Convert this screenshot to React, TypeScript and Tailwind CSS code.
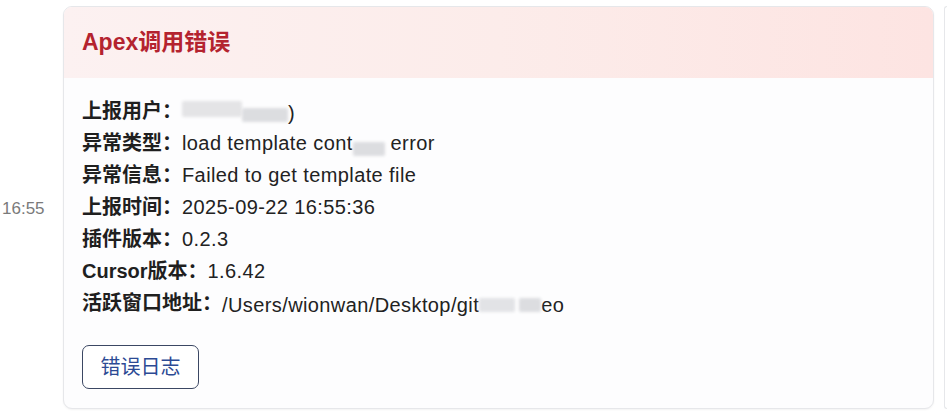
function Blur({ w, className = "" }: { w: number; className?: string }) {
  return (
    <span
      className={`inline-block h-[14px] rounded-[2px] bg-[#dcdde0] align-middle blur-[1.5px] ${className}`}
      style={{ width: w }}
    />
  );
}

function Row({ label, children }: { label: string; children: React.ReactNode }) {
  return (
    <div className="flex h-[32px] items-center whitespace-nowrap">
      <span className="font-semibold text-[#1f1f1f]">{label}：</span>
      <span className="tracking-[0.4px] text-[#222]">{children}</span>
    </div>
  );
}

export default function App() {
  return (
    <div
      className="flex h-[418px] w-[947px] bg-white"
      style={{ fontFamily: '"Liberation Sans", "Noto Sans CJK SC", sans-serif' }}
    >
      <div className="flex w-[63px] shrink-0 items-center pl-[2px] text-[17px] text-[#7a7a7a]">16:55</div>

      <div className="mt-[6px] flex h-[403px] w-[871px] flex-col overflow-hidden rounded-[9px] border border-[#e6e7ea] bg-[#fdfdfe] shadow-[0_1px_2px_rgba(0,0,0,0.05)]">
        <div className="flex h-[71px] shrink-0 items-center bg-gradient-to-r from-[#fcf1f1] via-[#fcecea] to-[#fde4e2] px-[18px]">
          <span className="text-[23px] font-semibold text-[#b4232f]">Apex调用错误</span>
        </div>

        <div className="flex flex-col px-[18px] pt-[17px] text-[20px]">
          <Row label="上报用户">
            <span className="inline-flex items-center">
              <Blur w={60} className="-mt-[8px] h-[16px] bg-[#e4e4e6]" />
              <Blur w={46} className="mt-[4px] h-[12px] bg-[#d6d6d9]" />
              <span>)</span>
            </span>
          </Row>
          <Row label="异常类型">
            load template cont
            <Blur w={32} className="mt-[8px] h-[12px] bg-[#d8d9dc]" /> error
          </Row>
          <Row label="异常信息">Failed to get template file</Row>
          <Row label="上报时间">2025-09-22 16:55:36</Row>
          <Row label="插件版本">0.2.3</Row>
          <Row label="Cursor版本">1.6.42</Row>
          <Row label="活跃窗口地址">
            /Users/wionwan/Desktop/git
            <span className="inline-flex items-center">
              <Blur w={36} className="mt-[12px] h-[10px] bg-[#e2e3e6]" />
              <Blur w={22} className="ml-[4px] mt-[12px] h-[8px] bg-[#d4d5d9]" />
            </span>
            eo
          </Row>

          <button
            type="button"
            className="mt-[26px] flex h-[44px] w-[117px] items-center justify-center rounded-[7px] border border-[#3b4763] bg-white text-[20px] text-[#2c4a94]"
          >
            错误日志
          </button>
        </div>
      </div>

      <div className="ml-[10px] mt-[6px] h-[403px] w-[3px] rounded-l border-y border-l border-[#e6e7ea]" />
    </div>
  );
}
